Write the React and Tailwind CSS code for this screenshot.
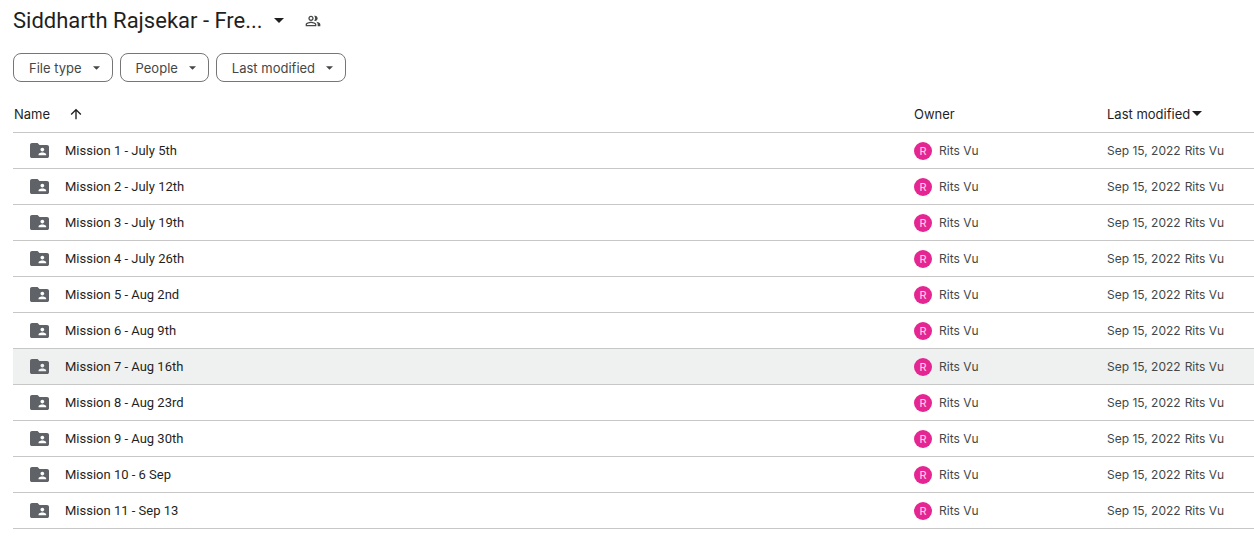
import { MdOutlinePeopleAlt, MdArrowUpward } from 'react-icons/md';

const folders = [
  'Mission 1 - July 5th',
  'Mission 2 - July 12th',
  'Mission 3 - July 19th',
  'Mission 4 - July 26th',
  'Mission 5 - Aug 2nd',
  'Mission 6 - Aug 9th',
  'Mission 7 - Aug 16th',
  'Mission 8 - Aug 23rd',
  'Mission 9 - Aug 30th',
  'Mission 10 - 6 Sep',
  'Mission 11 - Sep 13',
];

const activeFolder = 'Mission 7 - Aug 16th';

function Caret({ className }) {
  return (
    <svg viewBox="0 0 10 5" className={className} fill="currentColor" aria-hidden="true">
      <path d="M0 0h10L5 5z" />
    </svg>
  );
}

function SharedFolderIcon() {
  return (
    <svg viewBox="2 4 20 16" preserveAspectRatio="none" className="w-[19px] h-[15px] mb-px shrink-0" fill="#5f6368" aria-hidden="true">
      <path d="M20 6h-8l-2-2H4c-1.1 0-1.99.9-1.99 2L2 18c0 1.1.9 2 2 2h16c1.1 0 2-.9 2-2V8c0-1.1-.9-2-2-2zm-5 3c1.1 0 2 .9 2 2s-.9 2-2 2-2-.9-2-2 .9-2 2-2zm4 8h-8v-1c0-1.33 2.67-2 4-2s4 .67 4 2v1z" />
    </svg>
  );
}

function FilterChip({ label }) {
  return (
    <button className="flex items-center gap-[11px] h-[29px] pl-[15px] pr-3 rounded-lg border border-[#747775] text-[#444746] font-['Inter',sans-serif]">
      {label}
      <Caret className="w-[7px] h-1" />
    </button>
  );
}

function FolderRow({ name, active }) {
  return (
    <tr className={`h-9 border-b border-[#c7c7c7] ${active ? 'bg-[#eff1f0]' : ''}`}>
      <td className="p-0 pt-0.5">
        <div className="flex items-center gap-4 pl-[17px] text-[#1f1f1f]">
          <SharedFolderIcon />
          {name}
        </div>
      </td>
      <td className="p-0 pt-0.5">
        <div className="flex items-center gap-[7px] font-['Inter',sans-serif] text-xs leading-5">
          <span className="flex items-center justify-center size-[18px] rounded-full bg-[#e52592] text-white/80 text-[11px]">
            R
          </span>
          Rits Vu
        </div>
      </td>
      <td className="p-0 pt-0.5">
        <div className="flex gap-1 whitespace-nowrap font-['Inter',sans-serif] text-xs leading-5">
          <span>Sep 15, 2022</span>
          <span>Rits Vu</span>
        </div>
      </td>
    </tr>
  );
}

export default function App() {
  return (
    <main className="pl-[13px] bg-white font-['Roboto','Liberation_Sans',sans-serif] text-[13px] leading-5 text-[#444746] overflow-hidden">
      <header className="flex items-center h-[41px] text-[#1f1f1f]">
        <h1>
          <button className="flex items-center gap-[11px] text-[22px] leading-7">
            Siddharth Rajsekar - Fre...
            <Caret className="w-[10px] h-[5px]" />
          </button>
        </h1>
        <button className="ml-[21px] text-[#444746]" aria-label="Shared with others">
          <MdOutlinePeopleAlt size={16} />
        </button>
      </header>

      <div className="flex gap-[7px] mt-3">
        <FilterChip label="File type" />
        <FilterChip label="People" />
        <FilterChip label="Last modified" />
      </div>

      <table className="w-full table-fixed border-collapse mt-3.5">
        <thead>
          <tr className="h-9 border-b border-[#c7c7c7] text-left text-[#1f1f1f] font-['Inter',sans-serif]">
            <th className="p-0 font-normal">
              <button className="flex items-center gap-[18px] pl-px">
                Name
                <MdArrowUpward size={16} />
              </button>
            </th>
            <th className="p-0 w-[193px] font-normal">Owner</th>
            <th className="p-0 w-[147px] font-normal">
              <button className="flex items-center gap-0.5">
                Last modified
                <Caret className="w-[10px] h-[5px]" />
              </button>
            </th>
          </tr>
        </thead>
        <tbody>
          {folders.map((name) => (
            <FolderRow key={name} name={name} active={name === activeFolder} />
          ))}
        </tbody>
      </table>
    </main>
  );
}
